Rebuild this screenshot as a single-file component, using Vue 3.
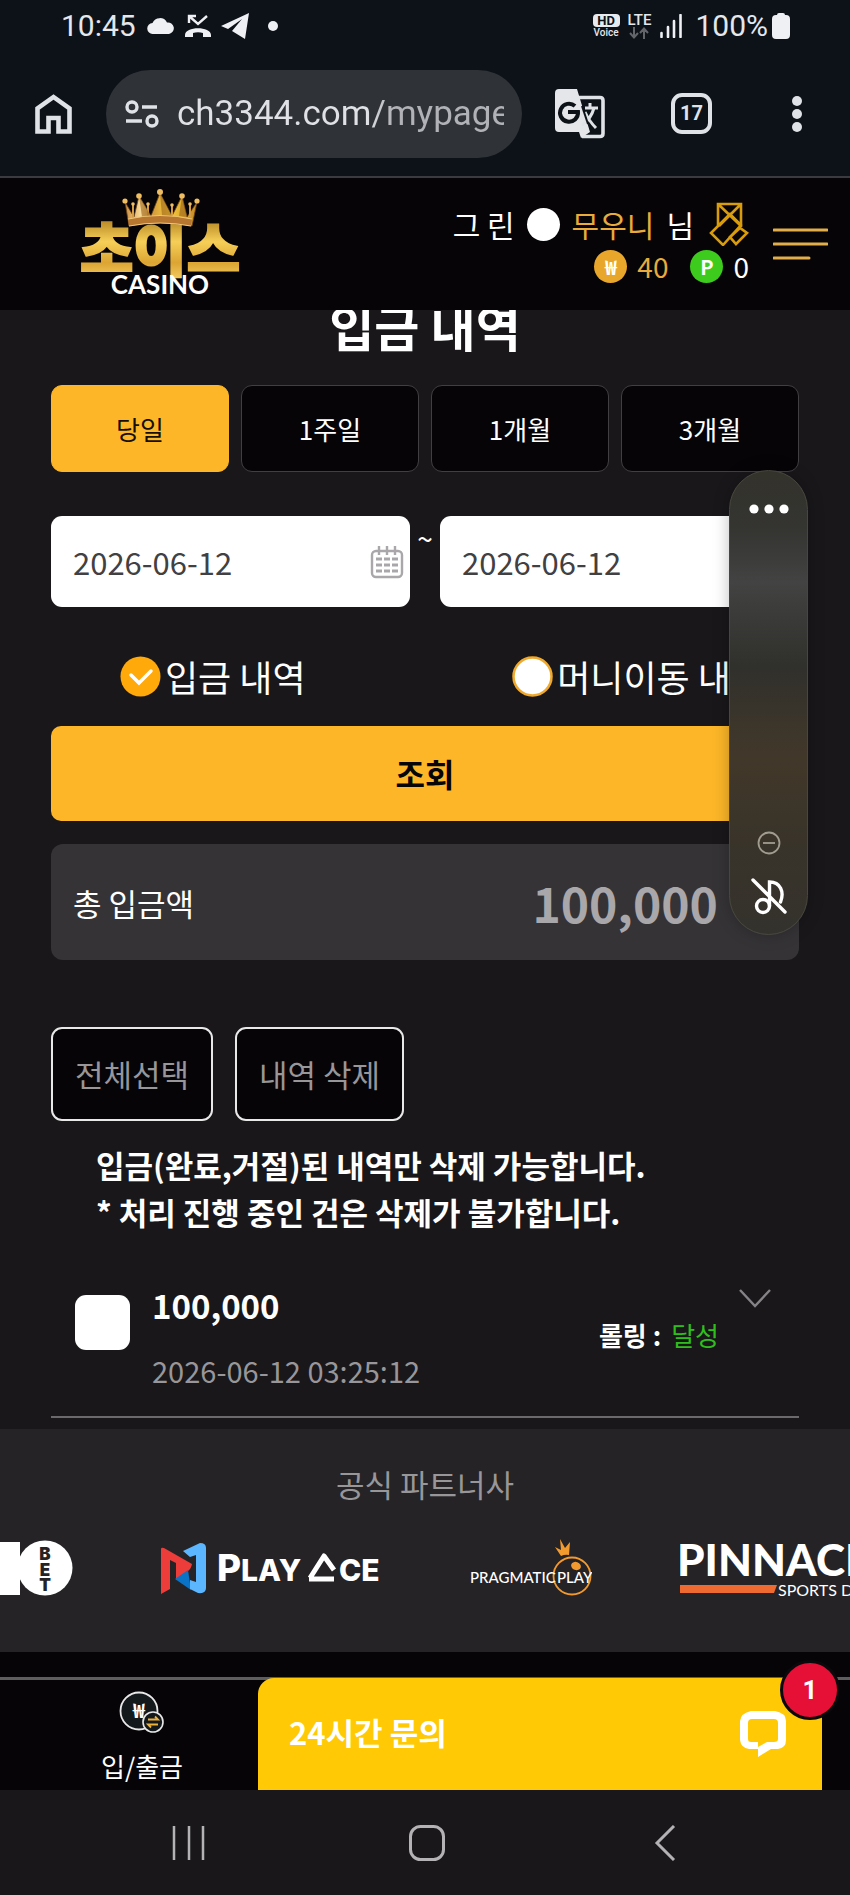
<script setup>
import { ref } from 'vue'

const url = ref('ch3344.com/mypage')
const ranges = ['당일', '1주일', '1개월', '3개월']
const range = ref('당일')
const from = ref('2026-06-12')
const to = ref('2026-06-12')
const kind = ref('deposit')
const kinds = [
  { id: 'deposit', label: '입금 내역' },
  { id: 'transfer', label: '머니이동 내역' }
]
const rows = [{ id: 1, amount: '100,000', time: '2026-06-12 03:25:12', state: '달성' }]
</script>

<template>
  <div class="phone">
    <div class="status">
      <span class="clock">10:45</span>
      <svg class="cloud" width="28" height="16" viewBox="0 0 28 16"><path d="M6 16a5.500 5.500 0 0 1-.5-11A8 8 0 0 1 20 4.500 5.800 5.800 0 0 1 22 16z" fill="#eef0f4" /></svg>
      <svg class="missed" width="26" height="24" viewBox="0 0 26 24"><path d="M4 9V2h7M4 2l9 8 9-8" fill="none" stroke="#eef0f4" stroke-width="2.400" /><path d="M0 21c0-9 26-9 26 0v2h-8v-4c-3-1-7-1-10 0v4H0z" fill="#eef0f4" /></svg>
      <svg class="plane" width="28" height="26" viewBox="0 0 28 26"><path d="M28 0 0 13l7 3L21 6 11 18l13 8z" fill="#eef0f4" /></svg>
      <span class="dot"></span>
      <span class="grow"></span>
      <span class="hd"><b>HD</b><i>Voice</i></span>
      <span class="lte">LTE
        <svg width="20" height="12" viewBox="0 0 20 12"><path d="M5 0v10M1 6l4 4.500L9 6M15 12V2m-4 4 4-4.500L19 6" fill="none" stroke="#62656a" stroke-width="2" /></svg>
      </span>
      <svg class="signal" width="22" height="24" viewBox="0 0 22 24"><path d="M1.500 19v4M8 13v10M14 7v16M20.500 1v22" stroke="#eef0f4" stroke-width="2.600" stroke-linecap="round" /></svg>
      <span class="clock">100%</span>
      <svg class="battery" width="18" height="26" viewBox="0 0 18 26"><path d="M5 2q0-2 2-2h4q2 0 2 2h1q4 0 4 4v16q0 4-4 4H4q-4 0-4-4V6q0-4 4-4z" fill="#eef0f4" /></svg>
    </div>

    <div class="toolbar">
      <button class="bare home" aria-label="Home"><svg width="37" height="40" viewBox="0 0 37 40"><path d="M2.500 14.500v23h11V24h10v13.500h11v-23L18.500 3z" fill="none" stroke="#dfe3e8" stroke-width="4.600" /></svg></button>
      <div class="pill">
        <svg width="34" height="28" viewBox="0 0 34 28"><g fill="none" stroke="#dfe3e8" stroke-width="3.400"><circle cx="7" cy="7" r="5" /><path d="M17 7h15M1 21h16" /><circle cx="27" cy="21" r="5" /></g></svg>
        <input v-model="url" class="url" aria-label="URL" />
      </div>
      <button class="bare translate" aria-label="Translate">
        <svg width="50" height="50" viewBox="0 0 50 50">
          <path d="M24 8.500h21q3 0 3 3v33q0 3-3 3H27" fill="none" stroke="#dfe3e8" stroke-width="3.600" />
          <path d="M4 0h18l13 43-9 6-2-6H4q-4 0-4-4V4q0-4 4-4z" fill="#e4e6ea" />
          <path d="M30 19h13M35 14v4M39 19q-3 11-12 17M30 23q4 9 11 16" fill="none" stroke="#dfe3e8" stroke-width="3" />
          <path d="M20 17a9 9 0 1 0 3 6h-10" fill="none" stroke="#0d1118" stroke-width="4" />
          <path d="m27 17 6 18" stroke="#0d1118" stroke-width="2" />
        </svg>
      </button>
      <button class="bare count" aria-label="Tabs">17</button>
      <button class="bare more" aria-label="More"><svg width="10" height="36" viewBox="0 0 10 36" fill="#dfe3e8"><circle cx="5" cy="5" r="5" /><circle cx="5" cy="18" r="5" /><circle cx="5" cy="31" r="5" /></svg></button>
    </div>

    <header class="site">
      <a href="#" class="brand" aria-label="초이스 CASINO">
        <svg width="172" height="112" viewBox="0 0 172 112">
          <defs>
            <linearGradient id="gold" x1="0" y1="0" x2="0" y2="1"><stop offset=".2" stop-color="#b98a26" /><stop offset=".45" stop-color="#f6cf58" /><stop offset=".7" stop-color="#dca433" /><stop offset="1" stop-color="#ffe07a" /></linearGradient>
            <linearGradient id="crown" x1="0" y1="0" x2="1" y2="0"><stop offset="0" stop-color="#c98b3d" /><stop offset=".22" stop-color="#f9dc9a" /><stop offset=".4" stop-color="#d59d3c" /><stop offset=".6" stop-color="#f7cd3d" /><stop offset="1" stop-color="#c58a25" /></linearGradient>
          </defs>
          <text x="82" y="83" text-anchor="middle" class="logo-ko" fill="url(#gold)" stroke="url(#gold)" stroke-width="2">초이스</text>
          <path d="M51 38 47 14l9 15 5-21 12 20 9-23 12 23 10-20 5 21 10-15-5 24q-31-6-63 0z" fill="url(#crown)" stroke="#6d4312" stroke-width=".8" />
          <path d="M55 30V17M70 28V17M94 28V18M112 29V17" stroke="#d49c45" stroke-width="2" />
          <path d="m82 5 12 24-10-1zM61 8l12 20-9 1zM104 8l5 21-8-1z" fill="#9c641a" opacity=".6" />
          <path d="M50 31q32-7 64 0l-1 7q-31-6-62 0z" fill="#b87731" />
          <path d="M50 31q32-7 64 0M51 38q31-6 62 0" fill="none" stroke="#f1c777" stroke-width="1.200" />
          <g fill="#efbd62"><circle cx="47" cy="13" r="2.600" /><circle cx="61" cy="8" r="2.800" /><circle cx="82" cy="4" r="3" /><circle cx="104" cy="8" r="2.800" /><circle cx="119" cy="13" r="2.600" /><circle cx="55" cy="16" r="1.800" /><circle cx="70" cy="16" r="1.800" /><circle cx="94" cy="17" r="1.800" /><circle cx="112" cy="16" r="1.800" /></g>
          <text x="82" y="106" text-anchor="middle" class="logo-en">CASINO</text>
        </svg>
      </a>
      <div class="user">
        <div class="line">
          <span>그 린</span><span class="ball"></span><span class="gold">무우니</span><span>님</span>
          <button class="bare rank" aria-label="등급"><svg width="40" height="44" viewBox="0 0 40 44"><g fill="none" stroke="#d99c0c" stroke-width="2.600"><path d="M9 24V2h23v23M9 2l23 22M32 2 10 24M21 12 2 31l12 12 18-20z" /><path d="m21 35 10-9 7 5-11 11z" /></g></svg></button>
        </div>
        <div class="line wallet">
          <span class="coin won">₩</span><span class="gold">40</span><span class="coin point">P</span><span>0</span>
        </div>
      </div>
      <button class="bare" aria-label="메뉴"><svg width="55" height="32" viewBox="0 0 55 32"><path d="M1 2h53M1 16h53M1 30h35" stroke="#e2ad4b" stroke-width="3" stroke-linecap="round" /></svg></button>
    </header>

    <main>
      <h1>입금 내역</h1>
      <div class="ranges">
        <button v-for="r in ranges" :key="r" :class="{ on: r === range }" @click="range = r">{{ r }}</button>
      </div>
      <div class="dates">
        <label class="date"><input v-model="from" aria-label="시작일" />
          <svg width="34" height="34" viewBox="0 0 34 34"><g fill="none" stroke="#aaa7ab" stroke-width="2.400"><rect x="2" y="6" width="30" height="26" rx="4" /><path d="M9 1v9M17 1v9M25 1v9" /><path d="M6 14h22M6 20h22M6 26h22" stroke-dasharray="6 2" stroke-width="3" /></g></svg>
        </label>
        <span class="tilde">~</span>
        <label class="date"><input v-model="to" aria-label="종료일" />
          <svg width="34" height="34" viewBox="0 0 34 34"><g fill="none" stroke="#aaa7ab" stroke-width="2.400"><rect x="2" y="6" width="30" height="26" rx="4" /><path d="M9 1v9M17 1v9M25 1v9" /><path d="M6 14h22M6 20h22M6 26h22" stroke-dasharray="6 2" stroke-width="3" /></g></svg>
        </label>
      </div>
      <div class="kinds">
        <label v-for="k in kinds" :key="k.id">
          <input v-model="kind" type="radio" name="kind" :value="k.id" />
          <svg width="41" height="41" viewBox="0 0 41 41"><g v-if="kind === k.id"><circle cx="20.500" cy="20.500" r="20" fill="#ffa90a" /><path d="m11 19 8 8 12-12" fill="none" stroke="#fff" stroke-width="3.500" stroke-linecap="round" /></g><circle v-else cx="20.500" cy="20.500" r="19" fill="#fff" stroke="#f0a92c" stroke-width="2.500" /></svg>
          <span>{{ k.label }}</span>
        </label>
      </div>
      <button class="search">조회</button>
      <section class="total"><span>총 입금액</span><span class="sum"><strong>100,000</strong><em>원</em></span></section>
      <div class="actions"><button>전체선택</button><button>내역 삭제</button></div>
      <p class="notice">입금(완료,거절)된 내역만 삭제 가능합니다.<br />* 처리 진행 중인 건은 삭제가 불가합니다.</p>
      <article v-for="r in rows" :key="r.id" class="row">
        <input type="checkbox" :aria-label="r.amount" />
        <div class="info"><strong>{{ r.amount }}</strong><time>{{ r.time }}</time></div>
        <p class="rolling"><b>롤링 :</b><span>{{ r.state }}</span></p>
        <button class="bare open" aria-label="상세"><svg width="32" height="19" viewBox="0 0 32 19"><path d="m1 1 15 16L31 1" fill="none" stroke="#858387" stroke-width="2.400" /></svg></button>
      </article>

      <aside class="panel">
        <svg width="40" height="10" viewBox="0 0 40 10" fill="#fff"><circle cx="5" cy="5" r="4.600" /><circle cx="20" cy="5" r="4.600" /><circle cx="35" cy="5" r="4.600" /></svg>
        <div class="tools">
          <button class="bare" aria-label="Minus"><svg width="24" height="24" viewBox="0 0 24 24"><g fill="none" stroke="#a19c90" stroke-width="1.800"><circle cx="12" cy="12" r="10.500" /><path d="M6 12h12" /></g></svg></button>
          <button class="bare" aria-label="Mute"><svg width="36" height="37" viewBox="0 0 36 37"><g fill="none" stroke="#fff" stroke-width="3.400" stroke-linecap="round"><circle cx="12" cy="28" r="6.500" /><path d="M18.500 28V4c11 0 15 10 11 20M2 2l32 32" /></g></svg></button>
        </div>
      </aside>
    </main>

    <section class="partners">
      <h2>공식 파트너사</h2>
      <div class="logos">
        <svg width="73" height="60" viewBox="0 0 73 60"><path d="M0 3h20v53H0z" fill="#fff" /><circle cx="45" cy="29" r="27.500" fill="#fff" /><g class="bet" text-anchor="middle"><text x="45" y="21">B</text><text x="45" y="37">E</text><text x="45" y="52">T</text></g></svg>
        <svg width="221" height="60" viewBox="0 0 221 60">
          <path d="M0 10q0-2 3-1l28 16q-1 5-4 7L15 41V24l-6-3v29l-9 5z" fill="#ed3d3b" />
          <path d="m14 40 13-9 3 20z" fill="#0b73c6" />
          <path d="m22 12 17-8q6 0 6 5v40q0 6-8 5l-8-4v-9l6 2V16l-6 2z" fill="#5cb6ff" />
          <text x="56" y="42" class="ace big">P</text><text x="80" y="42" class="ace">LAY</text>
          <path d="m149 39 14-22 10 14M148 40h25" fill="none" stroke="#fff" stroke-width="5" stroke-linejoin="round" />
          <text x="178" y="42" class="ace">CE</text>
        </svg>
        <svg width="122" height="60" viewBox="0 0 122 60">
          <path d="m91 17-6-9 6 3-1-11 5 9 5-6-1 13q-4-1-8 1z" fill="#f29a2e" />
          <ellipse cx="106" cy="27" rx="5" ry="4" fill="#f29a2e" transform="rotate(20 106 27)" />
          <circle cx="102" cy="37" r="18.500" fill="none" stroke="#f29a2e" stroke-width="1.800" />
          <text x="0" y="44" class="prag">PRAGMATIC</text><text x="87" y="44" class="prag">PLAY</text>
        </svg>
        <svg width="260" height="60" viewBox="0 0 260 60"><text x="-3" y="37" class="pin">PINNACLE</text><path d="M0 46h97l-3 8H0z" fill="#ee6a30" /><text x="98" y="57" class="sports">SPORTS DATA</text></svg>
      </div>
    </section>

    <footer class="dock">
      <a href="#" class="cash">
        <svg width="46" height="42" viewBox="0 0 46 42"><circle cx="20" cy="20" r="18.500" fill="#14191c" stroke="#e8e8e8" stroke-width="1.800" /><text x="20" y="27" text-anchor="middle" class="won-icon">₩</text><circle cx="34" cy="31" r="10" fill="#14191c" stroke="#e8e8e8" stroke-width="1.600" /><path d="M29 28.500h10l-3-3M39 33.500H29l3 3" fill="none" stroke="#eeb13a" stroke-width="1.800" /></svg>
        <span>입/출금</span>
      </a>
      <button class="chat">
        <span>24시간 문의</span>
        <svg width="46" height="46" viewBox="0 0 46 46"><path d="M11 0h24q11 2 11 10v19q0 8-8 9h-7L18 46v-8H9q-8-1-9-9V10Q1 2 11 0zM8 12v16q0 3 3 3h7v5l9-5h7q4 0 4-3V12q0-4-4-4H12q-4 0-4 4z" fill="#fff" fill-rule="evenodd" /></svg>
        <b class="badge">1</b>
      </button>
    </footer>

    <nav class="keys">
      <button class="bare" aria-label="Recents"><svg width="34" height="36" viewBox="0 0 34 36"><path d="M2 1v34M17 1v34M31 1v34" stroke="#b4b2b5" stroke-width="2.500" /></svg></button>
      <button class="bare" aria-label="Home"><svg width="36" height="36" viewBox="0 0 36 36"><rect x="1.500" y="1.500" width="33" height="33" rx="10" fill="none" stroke="#b4b2b5" stroke-width="3" /></svg></button>
      <button class="bare" aria-label="Back"><svg width="22" height="36" viewBox="0 0 22 36"><path d="M20 1 3 18l17 17" fill="none" stroke="#b4b2b5" stroke-width="3" /></svg></button>
    </nav>
  </div>
</template>

<style>
body { margin: 0; background: #19171a; }
</style>

<style scoped>
* { box-sizing: border-box; }
.phone { font-family: "Noto Sans CJK KR", "Noto Sans", sans-serif; color: #fff; background: #19171a; overflow: hidden; }
svg { display: block; flex: none; }
button, input { font: inherit; color: inherit; margin: 0; }
.bare { background: none; border: 0; padding: 0; }
a { color: inherit; text-decoration: none; }
h1, h2, p { margin: 0; }

.status { display: flex; align-items: center; height: 51px; padding: 0 60px 0 61px; background: #0d1118; font-family: Roboto, sans-serif; color: #e4e7ec; }
.clock { font-size: 30px; line-height: 36px; }
.cloud { margin-left: 11px; }
.missed { margin-left: 10px; }
.plane { margin-left: 10px; }
.dot { width: 10px; height: 10px; margin-left: 19px; border-radius: 50%; background: #eef0f4; }
.grow { flex: 1; }
.hd { display: flex; flex-direction: column; align-items: center; width: 27px; margin-right: 8px; }
.hd b { width: 27px; border-radius: 4px; background: #e8eaee; color: #0d1118; font-size: 13px; line-height: 13px; text-align: center; }
.hd i { font-style: normal; font-weight: 500; font-size: 10px; line-height: 11px; }
.lte { display: flex; flex-direction: column; align-items: center; margin-right: 9px; font-weight: 500; font-size: 15px; line-height: 14px; }
.signal { margin-right: 13px; }
.battery { margin-left: 4px; }

.toolbar { display: flex; align-items: center; height: 127px; padding: 0 48px 0 35px; background: #0d1118; border-bottom: 2px solid #3a3b40; font-family: Roboto, sans-serif; }
.pill { display: flex; align-items: center; gap: 18px; flex: 1; min-width: 0; height: 88px; margin: 0 33px 0 34px; padding: 0 18px 0 19px; border-radius: 44px; background: #2f3237; }
.url { flex: 1; min-width: 0; height: 48px; padding: 0; border: 0; outline: 0; font-size: 35px; color: transparent; background: linear-gradient(90deg, #dfe1e6 58%, #b0b2b7 66%); background-clip: text; -webkit-background-clip: text; }
.count { width: 41px; height: 41px; margin: 0 80px 0 66px; border: 4px solid #dfe3e8; border-radius: 11px; color: #dfe3e8; font-size: 20px; font-weight: 700; line-height: 33px; }

.site { position: relative; z-index: 1; display: flex; align-items: center; height: 132px; padding: 0 22px 0 78px; background: #060407; }
.brand { margin: 0 auto 0 0; }
.logo-ko { font: 900 58px "Noto Sans CJK KR", sans-serif; }
.logo-en { font: 700 26px Lato, sans-serif; fill: #fff; }
.user { display: flex; flex-direction: column; align-items: flex-end; margin-right: 24px; font-size: 30px; }
.line { display: flex; align-items: center; gap: 12px; height: 44px; }
.ball { width: 33px; height: 33px; border-radius: 50%; background: #fff; }
.gold { color: #e8ab3c; }
.rank { margin-left: 3px; }
.wallet { height: 40px; gap: 10px; font-size: 28px; }
.coin { display: grid; place-items: center; width: 33px; height: 33px; border-radius: 50%; font-size: 20px; font-weight: 700; line-height: 33px; }
.won { background: #e8a72b; }
.point { margin-left: 12px; background: #3dcc1d; }

main { display: flow-root; position: relative; padding: 0 51px 11px; }
h1 { margin-top: -13px; font-size: 49px; line-height: 58px; font-weight: 700; text-align: center; }
.ranges { display: grid; grid-template-columns: repeat(4, 1fr); gap: 12px; margin-top: 30px; }
.ranges button { height: 87px; padding: 0; border: 1px solid #413f42; border-radius: 11px; background: #060407; font-size: 26px; }
.ranges .on { border-color: #fcb628; background: #fcb628; color: #160d04; }
.dates { display: flex; margin-top: 44px; }
.date { display: flex; align-items: center; flex: 1; min-width: 0; height: 91px; padding: 0 6px 0 22px; border-radius: 11px; background: #fff; }
.date input { flex: 1; min-width: 0; height: 60px; padding: 0; border: 0; outline: 0; background: none; color: #414043; font-size: 31px; }
.tilde { width: 30px; font-size: 28px; line-height: 44px; text-align: center; }
.kinds { display: flex; justify-content: space-between; padding: 0 35px 0 69px; margin: 43px 0 24px; }
.kinds label { position: relative; display: flex; align-items: center; gap: 4px; height: 52px; font-size: 36px; white-space: nowrap; }
.kinds input { position: absolute; opacity: 0; }
.search { display: block; width: 100%; height: 95px; padding: 0 0 2px; border: 0; border-radius: 10px; background: #fcb628; color: #080507; font-size: 32px; font-weight: 700; }
.total { display: flex; align-items: center; justify-content: space-between; height: 116px; margin-top: 23px; padding: 0 41px 0 22px; border-radius: 12px; background: #353336; font-size: 31px; }
.sum { display: flex; align-items: center; gap: 18px; color: #aaa7ab; }
.sum strong { font-size: 48px; line-height: 60px; }
.sum em { font-size: 24px; font-style: normal; }
.actions { display: flex; gap: 22px; margin-top: 67px; }
.actions button { height: 94px; padding: 0 22px 2px; border: 2px solid #e8e8e8; border-radius: 11px; background: #060407; color: #989699; font-size: 31px; }
.notice { margin-top: 20px; padding-left: 45px; font-size: 31px; font-weight: 700; line-height: 47px; }
.row { display: flex; align-items: flex-start; margin-top: 38px; padding: 8px 28px 24px 24px; border-bottom: 2px solid #6b696c; }
.row input { appearance: none; flex: none; width: 55px; height: 55px; margin-top: 14px; border-radius: 11px; background: #fff; }
.info { display: flex; flex-direction: column; flex: 1; margin-left: 22px; }
.info strong { font-size: 33px; line-height: 48px; }
.info time { margin-top: 19px; color: #989699; font-size: 29px; line-height: 44px; }
.rolling { display: flex; gap: 10px; margin-top: 34px; font-size: 26px; line-height: 40px; }
.rolling span { color: #2fbf1c; }
.open { margin: 8px 0 0 20px; }

.panel { position: absolute; top: 160px; right: 42px; display: flex; flex-direction: column; align-items: center; justify-content: space-between; width: 79px; height: 465px; padding: 33px 0 19px; border: 1px solid #48473f; border-radius: 40px; background: linear-gradient(180deg, #33322b 0, #343431 12%, #424342 24%, #30302c 42%, #42382a 62%, #3a3429 76%, #34322d 100%); box-shadow: 0 0 16px rgba(0, 0, 0, .25); }
.tools { display: flex; flex-direction: column; align-items: center; gap: 23px; }

.partners { padding: 32px 0 53px; background: #252326; }
h2 { color: #989699; font-size: 31px; line-height: 46px; font-weight: 400; text-align: center; }
.logos { display: flex; gap: 88px; margin-top: 32px; overflow: hidden; }
.bet { font: 900 17px Inter, sans-serif; fill: #252326; }
.ace { font: 800 30px Inter, sans-serif; fill: #fff; }
.ace.big { font-size: 37px; }
.prag { font: 500 15px Lato, sans-serif; fill: #fff; }
.pin { font: 900 44px Lato, sans-serif; fill: #fff; }
.sports { font: 400 16px Lato, sans-serif; fill: #fff; }

.dock { display: flex; padding-right: 28px; height: 138px; border-top: 25px solid #060407; background: #060407; box-shadow: inset 0 3px #5e5e5e; }
.cash { display: flex; flex-direction: column; align-items: center; width: 258px; padding: 14px 0 0 26px; font-size: 26px; line-height: 40px; }
.cash span { margin-top: 13px; }
.won-icon { font: 700 20px "Noto Sans CJK KR", sans-serif; fill: #fff; }
.chat { position: relative; display: flex; align-items: center; justify-content: space-between; flex: 1; margin-top: 1px; padding: 0 36px 6px 31px; border: 0; border-radius: 16px 0 0 0; background: #ffca05; color: #fff; font-size: 31px; font-weight: 700; }
.chat svg { margin-top: 6px; }
.badge { position: absolute; top: -18px; right: -18px; width: 60px; height: 60px; border: 3px solid #0b090c; border-radius: 50%; background: #e60f36; font: 700 26px/54px Roboto, sans-serif; text-align: center; }

.keys { display: grid; grid-template-columns: repeat(3, 1fr); place-items: center; height: 106px; padding: 0 66px 0 70px; background: #19171a; }
</style>
